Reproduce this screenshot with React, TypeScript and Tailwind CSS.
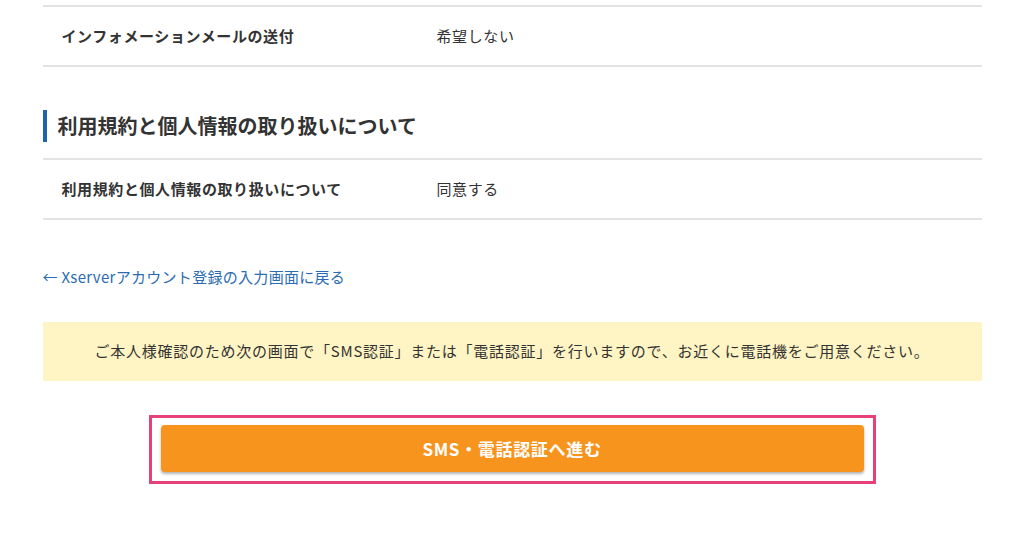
const font = { fontFamily: '"Noto Sans CJK JP", "Noto Sans", sans-serif' }

function Row({ label, value }: { label: string; value: string }) {
  return (
    <div className="flex items-center h-[60px] border-b-2 border-[#e3e3e3] text-[15px] text-[#333] tracking-[0.04em]">
      <div className="w-[394px] pl-[19px] font-bold">{label}</div>
      <div>{value}</div>
    </div>
  )
}

export default function App() {
  return (
    <div className="min-h-[535px] bg-white" style={font}>
      <div className="w-[939px] mx-auto pt-[5px]">
        <div className="border-t-2 border-[#e3e3e3]">
          <Row label="インフォメーションメールの送付" value="希望しない" />
        </div>

        <h2 className="mt-[43px] flex items-center h-[32px] border-l-4 border-[#1f63b0] pl-[11px] text-[20px] font-bold text-[#333]">
          利用規約と個人情報の取り扱いについて
        </h2>
        <div className="mt-[16px] border-t-2 border-[#e3e3e3]">
          <Row label="利用規約と個人情報の取り扱いについて" value="同意する" />
        </div>

        <a href="#" className="mt-[47px] block text-[15px] leading-[20px] tracking-[0.02em] text-[#2b6bb2]">
          ← Xserverアカウント登録の入力画面に戻る
        </a>

        <div className="mt-[35px] h-[59px] flex items-center justify-center bg-[#fff4c3] text-[15px] tracking-[0.05em] text-[#333]">
          ご本人様確認のため次の画面で「SMS認証」または「電話認証」を行いますので、お近くに電話機をご用意ください。
        </div>

        <div className="mt-[34px] flex justify-center">
          <div className="w-[727px] border-[3px] border-[#e8407a] pt-[7px] pb-[9px] px-[9px]">
            <button className="w-full h-[47px] rounded-[4px] bg-[#f7941e] text-white text-[17px] tracking-[0.04em] font-bold shadow-[0_2px_3px_rgba(0,0,0,0.3)]">
              SMS・電話認証へ進む
            </button>
          </div>
        </div>
      </div>
    </div>
  )
}
